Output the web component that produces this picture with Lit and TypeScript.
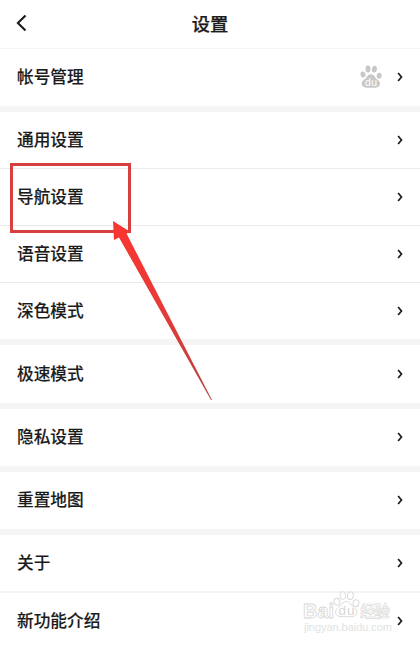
import { LitElement, html, svg, css, nothing } from "lit";
import { customElement, property } from "lit/decorators.js";
import { classMap } from "lit/directives/class-map.js";

const GROUPS: string[][] = [
  ["帐号管理"],
  ["通用设置", "导航设置", "语音设置", "深色模式"],
  ["极速模式"],
  ["隐私设置"],
  ["重置地图"],
  ["关于", "新功能介绍"],
];

const paw = svg`
  <ellipse cx="3" cy="9.500" rx="2.500" ry="3.100" transform="rotate(-12 3 9.500)"/>
  <ellipse cx="8" cy="4" rx="2.500" ry="3.400"/>
  <ellipse cx="14.400" cy="4.200" rx="2.500" ry="3.400" transform="rotate(10 14.400 4.200)"/>
  <ellipse cx="19.200" cy="10.800" rx="2.500" ry="3" transform="rotate(12 19.200 10.800)"/>
  <path d="M11 9.300c2.500 0 3.300 1.900 4.700 3.600 1.700 1.900 4.300 2.900 4.300 5.700 0 2.600-2 4.100-4.400 4.100H6.400C3.600 22.700 1.700 21 1.700 18.600c0-2.700 2.700-3.900 4.400-5.900C7.400 11 8.600 9.300 11 9.300z"/>`;

@customElement("setting-row")
export class SettingRow extends LitElement {
  @property() label = "";
  @property({ type: Boolean }) account = false;

  static styles = css`
    :host {
      display: flex;
      align-items: center;
      flex: 1;
      padding: 0 17.5px 0 17px;
    }
    .label {
      flex: 1;
      padding-bottom: 1.4px;
      font-size: 16.7px;
      line-height: 24px;
      -webkit-text-stroke: 0.12px #1b1b1b;
    }
    .paw {
      width: 22px;
      height: 24px;
      margin: 0 14.5px 1px 0;
      fill: #c8c8c8;
    }
    .du {
      fill: #fff;
      font: 400 10.5px "Liberation Sans", sans-serif;
    }
    .chevron {
      width: 6px;
      height: 10px;
      fill: none;
      stroke: #1b1b1b;
      stroke-width: 1.7;
    }
  `;

  render() {
    return html`
      <span class="label">${this.label}</span>
      ${this.account
        ? html`<svg class="paw" viewBox="0 0 22 24">
            ${paw}<text class="du" x="5" y="21.300" textLength="12">du</text>
          </svg>`
        : nothing}
      <svg class="chevron" viewBox="0 0 6 10">
        <path d="M1.100 1 4.500 5 1.100 9" />
      </svg>
    `;
  }
}

@customElement("app-root")
export class AppRoot extends LitElement {
  static styles = css`
    :host {
      display: block;
      position: relative;
      width: 420px;
      height: 645px;
      overflow: hidden;
      background: #fff;
      color: #1b1b1b;
      font-family: "Noto Sans CJK SC", sans-serif;
      font-weight: 500;
    }
    .header {
      display: grid;
      grid-template-columns: 40px 1fr 40px;
      align-items: center;
      box-sizing: border-box;
      height: 49px;
      padding-bottom: 3px;
      border-bottom: 1px solid #f5f5f5;
    }
    .back {
      width: 11px;
      height: 18px;
      margin-left: 16px;
      fill: none;
      stroke: #1b1b1b;
      stroke-width: 2.1;
    }
    .title {
      margin: 0;
      font-size: 18.3px;
      font-weight: 500;
      line-height: 26px;
      text-align: center;
      -webkit-text-stroke: 0.25px #1b1b1b;
    }
    .group {
      border-bottom: 6px solid #f5f5f5;
    }
    .group:last-child {
      border-bottom: 0;
    }
    .item {
      display: flex;
      box-sizing: border-box;
      height: 57px;
      border-bottom: 1px solid #eaeaea;
    }
    .item.last {
      border-bottom: 0;
      padding-bottom: 1px;
    }
    .item.tail {
      height: 56px;
      padding-bottom: 0;
    }
    .item.soft {
      height: 58px;
      border-bottom: 2px solid #f3f3f3;
    }
    .item.tall {
      height: 58px;
      padding-bottom: 0;
    }
    .item.end {
      padding-bottom: 2px;
    }
    .overlay {
      position: absolute;
      inset: 0;
      pointer-events: none;
    }
    .frame {
      fill: none;
      stroke: #d8403f;
      stroke-width: 3;
    }
    .mark {
      fill: #fff;
      stroke: #d8d8d8;
      stroke-width: 0.8;
    }
    .latin {
      font: 700 20px "Liberation Sans", sans-serif;
    }
    .small {
      fill: #d6d6d6;
      stroke: none;
      font: 400 13.5px "Liberation Sans", sans-serif;
    }
    .cjk {
      font: 500 15.5px "Noto Sans CJK SC", sans-serif;
      stroke-width: 0.6;
    }
    .site {
      fill: #e2e2e2;
      font: 400 11px "Liberation Sans", sans-serif;
    }
  `;

  render() {
    return html`
      <header class="header">
        <svg class="back" viewBox="0 0 11 18">
          <path d="M9.500 1.500 1.900 9l7.600 7.500" />
        </svg>
        <h1 class="title">设置</h1>
      </header>
      <main>
        ${GROUPS.map(
          (group, g) => html`<section class="group">
            ${group.map((label, i) => {
              const last = i === group.length - 1;
              return html`<div
                class=${classMap({
                  item: true,
                  last,
                  tail: last && g === 1,
                  tall: g === 2,
                  soft: g === 5 && !last,
                  end: g === 5 && last,
                })}
              >
                <setting-row .label=${label} .account=${g === 0}></setting-row>
              </div>`;
            })}
          </section>`
        )}
      </main>
      <svg class="overlay" width="420" height="645" viewBox="0 0 420 645">
        <defs>
          <linearGradient id="shaft" x1="0" y1="0" x2="0" y2="1">
            <stop offset="0" stop-color="#fa3531" />
            <stop offset=".5" stop-color="#e53b38" />
            <stop offset="1" stop-color="#b5423f" />
          </linearGradient>
        </defs>
        <rect class="frame" x="11.500" y="164.500" width="118" height="67" />
        <path
          fill="url(#shaft)"
          d="M113 221 130.500 232 126.500 233.500 212 400 211 400 119 237.500 114 240z"
        />
        <g class="mark">
          <text class="latin" x="303" y="617.500" textLength="31" lengthAdjust="spacingAndGlyphs">Bai</text>
          <g transform="translate(333.500 591) scale(1.170 1.130)">${paw}</g>
          <text class="small" x="338.500" y="615" textLength="16">du</text>
          <text class="cjk" x="360" y="617" textLength="30">经验</text>
        </g>
        <text class="site" x="304" y="631" textLength="88">jingyan.baidu.com</text>
      </svg>
    `;
  }
}
